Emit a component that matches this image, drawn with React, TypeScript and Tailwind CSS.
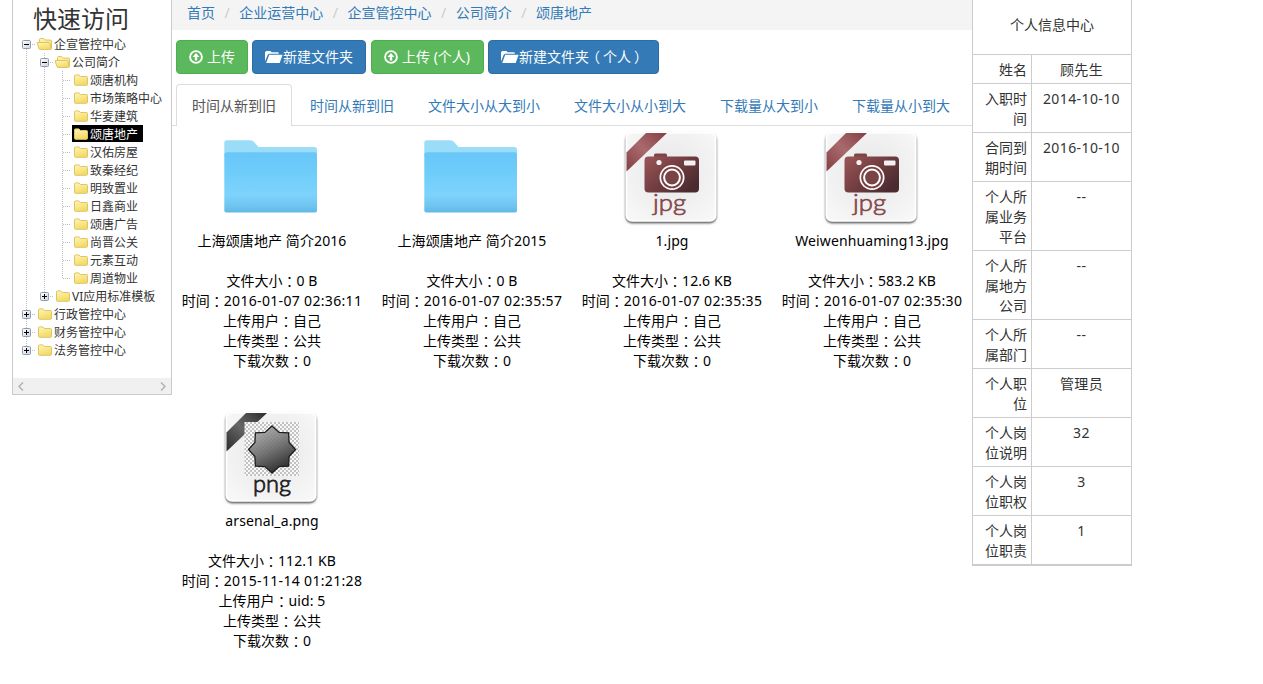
import React from "react";

type Node = { label: string; level: 0 | 1 | 2; kind: "open" | "closed" | "leaf"; selected?: boolean; last?: boolean };

const tree: Node[] = [
  { label: "企宣管控中心", level: 0, kind: "open" },
  { label: "公司简介", level: 1, kind: "open" },
  { label: "颂唐机构", level: 2, kind: "leaf" },
  { label: "市场策略中心", level: 2, kind: "leaf" },
  { label: "华麦建筑", level: 2, kind: "leaf" },
  { label: "颂唐地产", level: 2, kind: "leaf", selected: true },
  { label: "汉佑房屋", level: 2, kind: "leaf" },
  { label: "致秦经纪", level: 2, kind: "leaf" },
  { label: "明致置业", level: 2, kind: "leaf" },
  { label: "日鑫商业", level: 2, kind: "leaf" },
  { label: "颂唐广告", level: 2, kind: "leaf" },
  { label: "尚晋公关", level: 2, kind: "leaf" },
  { label: "元素互动", level: 2, kind: "leaf" },
  { label: "周道物业", level: 2, kind: "leaf", last: true },
  { label: "VI应用标准模板", level: 1, kind: "closed", last: true },
  { label: "行政管控中心", level: 0, kind: "closed" },
  { label: "财务管控中心", level: 0, kind: "closed" },
  { label: "法务管控中心", level: 0, kind: "closed", last: true },
];

const dots = { stroke: "#bdbdbd", strokeWidth: 1, strokeDasharray: "1 1" };

function Guide({ from = 0, to = 18, branch = false }: { from?: number; to?: number; branch?: boolean }) {
  return (
    <svg className="h-[18px] w-[18px] shrink-0" viewBox="0 0 18 18">
      <line x1="8.5" x2="8.5" y1={from} y2={to} {...dots} />
      {branch && <line x1="9" x2="17" y1="9.5" y2="9.5" {...dots} />}
    </svg>
  );
}

function Toggle({ open, first, last }: { open: boolean; first?: boolean; last?: boolean }) {
  return (
    <svg className="h-[18px] w-[18px] shrink-0" viewBox="0 0 18 18">
      <defs>
        <linearGradient id="toggleFill" x1="0" y1="0" x2="1" y2="1">
          <stop offset="0" stopColor="#fff" />
          <stop offset="1" stopColor="#cfd3d8" />
        </linearGradient>
      </defs>
      {!first && <line x1="8.5" x2="8.5" y1="0" y2="5" {...dots} />}
      {!last && <line x1="8.5" x2="8.5" y1="14" y2="18" {...dots} />}
      <line x1="14" x2="18" y1="9.5" y2="9.5" {...dots} />
      <rect x="4.5" y="5.5" width="8" height="8" rx="1" fill="url(#toggleFill)" stroke="#8c9cb4" />
      <path d={open ? "M6 9.5h5" : "M6 9.5h5M8.5 7v5"} stroke="#000" />
    </svg>
  );
}

function TreeFolder({ open }: { open: boolean }) {
  return (
    <svg className="h-[18px] w-[18px] shrink-0" viewBox="0 0 18 18">
      <defs>
        <linearGradient id="yellow" x1="0" y1="0" x2="0.4" y2="1">
          <stop offset="0" stopColor="#fff6b8" />
          <stop offset="1" stopColor="#f3da66" />
        </linearGradient>
      </defs>
      {open ? (
        <g stroke="#dfc566" fill="url(#yellow)" strokeLinejoin="round">
          <path d="M3.5 13.5V4.5q0-1 1-1h3.2l1.5 1.5h5.3q1 0 1 1v7.5z" />
          <path d="M1 7.5h11.8q.7 0 .9.7l1.6 5.8q-.2.5-.8.5H4q-.7 0-.9-.6z" />
        </g>
      ) : (
        <path d="M2.5 13.3V4.9q0-1 1-1h3.4l1.6 1.6h6q1 0 1 1v6.8q0 1-1 1h-11q-1 0-1-1z" fill="url(#yellow)" stroke="#dfc566" />
      )}
    </svg>
  );
}

function TreeRow({ node, first }: { node: Node; first: boolean }) {
  return (
    <div className="flex h-[18px] items-center pl-[5px] text-[12px] leading-[18px] whitespace-nowrap text-[#333]">
      {node.level > 0 && <Guide />}
      {node.level > 1 && <Guide />}
      {node.kind === "leaf" ? (
        <Guide branch to={node.last ? 10 : 18} />
      ) : (
        <Toggle open={node.kind === "open"} first={first} last={node.last} />
      )}
      <div className={node.selected ? "mb-px flex h-[17px] items-center bg-black pr-[5px] text-white" : "flex h-[18px] items-center"}>
        <TreeFolder open={node.kind === "open"} />
        <span className="pt-[2px]">{node.label}</span>
      </div>
    </div>
  );
}

function UploadIcon() {
  return (
    <svg className="mr-1 h-[14px] w-[14px]" viewBox="0 0 14 14">
      <circle cx="7" cy="7" r="5.9" fill="none" stroke="#fff" strokeWidth="1.9" />
      <path d="M7 2.9L10.4 7H8.2v3.6H5.8V7H3.6z" fill="#fff" />
    </svg>
  );
}

function OpenFolderIcon() {
  return (
    <svg className="h-[14px] w-[18px]" viewBox="0 0 18 14">
      <path d="M0 11.5V2.2L1.2.9h4.2l1.2 1.3h6.2q1 0 1 1v.6H4L2.6 5z" fill="#fff" />
      <path d="M4.2 4.8H17.6L14.7 13H1.2z" fill="#fff" />
    </svg>
  );
}

function FolderArt() {
  return (
    <svg className="h-[105px] w-[100px]" viewBox="0 0 100 105">
      <defs>
        <linearGradient id="folderBody" x1="0" y1="0" x2="0" y2="1">
          <stop offset="0" stopColor="#68c7f7" />
          <stop offset="0.25" stopColor="#6ccbf9" />
          <stop offset="0.7" stopColor="#7dd3fc" />
          <stop offset="0.88" stopColor="#70c6f0" />
          <stop offset="1" stopColor="#62b8e6" />
        </linearGradient>
      </defs>
      <path d="M2.3 30V16.5q0-2.3 2.3-2.3h24q2 0 3.5 1.8l3 3.5q1.2 1.5 3 1.5h54.5q2.4 0 2.4 2.5V32z" fill="#9bdcf8" />
      <path d="M2.3 29q0-2.7 2.5-2.7h87.7q2.5 0 2.5 2.7V84.5q0 2-2 2H4.3q-2 0-2-2z" fill="url(#folderBody)" />
    </svg>
  );
}

function Tile({ children, ribbon, tone, sheen }: { children: React.ReactNode; ribbon: string; tone: string; sheen: string }) {
  return (
    <svg className="h-[105px] w-[100px]" viewBox="0 0 100 105">
      <defs>
        <radialGradient id="tile" cx="0.5" cy="0.45" r="0.7">
          <stop offset="0" stopColor="#e6e6e6" />
          <stop offset="1" stopColor="#f8f8f8" />
        </radialGradient>
        <linearGradient id={ribbon} x1="0" y1="1" x2="1" y2="0">
          <stop offset="0" stopColor={tone} />
          <stop offset="0.5" stopColor={sheen} />
          <stop offset="1" stopColor={tone} />
        </linearGradient>
        <filter id="tileShadow" x="-10%" y="-10%" width="120%" height="120%">
          <feGaussianBlur stdDeviation="0.8" />
        </filter>
      </defs>
      <rect x="3.6" y="7.5" width="90.8" height="89.7" rx="6.5" fill="#555" filter="url(#tileShadow)" />
      <rect x="4.4" y="6.6" width="89.2" height="88.2" rx="5.5" fill="url(#tile)" stroke="#fff" strokeWidth="1.8" />
      <path d="M4.5 26.5L24 7H45L4.5 45.5z" fill={"url(#" + ribbon + ")"} />
      {children}
    </svg>
  );
}

function JpgArt() {
  return (
    <Tile ribbon="ribbonRed" tone="#843f43" sheen="#a86a6d">
      <defs>
        <linearGradient id="camera" x1="0" y1="0" x2="1" y2="0.7">
          <stop offset="0" stopColor="#9c5658" />
          <stop offset="0.5" stopColor="#743f42" />
          <stop offset="1" stopColor="#4a2b2f" />
        </linearGradient>
      </defs>
      <path d="M32 31v-2q0-1.5 1.5-1.5h10Q45 27.5 45 29v2z" fill="#7d4548" />
      <rect x="22.5" y="30.5" width="54.5" height="36" rx="4" fill="url(#camera)" />
      <circle cx="37" cy="36.5" r="2.6" fill="#f5f0f0" />
      <rect x="62" y="34.5" width="11.5" height="5" rx="1" fill="#f5f0f0" />
      <circle cx="50" cy="51.5" r="12.5" fill="#fff" />
      <circle cx="50" cy="51.5" r="10.8" fill="#7a4447" />
      <circle cx="50" cy="51.5" r="7.9" fill="none" stroke="#fff" strokeWidth="2" />
      <text x="47.5" y="85" textAnchor="middle" textLength="33" lengthAdjust="spacingAndGlyphs" fill="#84494c" stroke="#84494c" strokeWidth="0.7" className="font-['Lato',sans-serif] text-[23px] font-light">jpg</text>
    </Tile>
  );
}

function PngArt() {
  const star = Array.from({ length: 16 }, (_, i) => {
    const angle = (i * Math.PI) / 8 - Math.PI / 2;
    const r = i % 2 ? 18.5 : 23.5;
    return (50 + r * Math.cos(angle)).toFixed(1) + "," + (43.5 + r * Math.sin(angle)).toFixed(1);
  }).join(" ");
  return (
    <Tile ribbon="ribbonGray" tone="#2c2c2c" sheen="#666">
      <defs>
        <pattern id="checks" width="4" height="4" patternUnits="userSpaceOnUse">
          <rect width="4" height="4" fill="#f8f8f8" />
          <path d="M0 0h2v2H0zM2 2h2v2H2z" fill="#c2c2c2" />
        </pattern>
        <linearGradient id="star" x1="0.2" y1="0" x2="0.7" y2="1">
          <stop offset="0" stopColor="#aaa" stopOpacity="0.85" />
          <stop offset="0.5" stopColor="#707070" stopOpacity="0.95" />
          <stop offset="1" stopColor="#262626" />
        </linearGradient>
      </defs>
      <rect x="22.5" y="16" width="54.5" height="54" fill="url(#checks)" />
      <polygon points={star} fill="url(#star)" stroke="#1d1d1d" strokeWidth="1.3" />
      <text x="50" y="86" textAnchor="middle" textLength="38" lengthAdjust="spacingAndGlyphs" fill="#222" stroke="#222" strokeWidth="0.8" className="font-['Lato',sans-serif] text-[23px] font-light">png</text>
    </Tile>
  );
}

type FileItem = { art: "folder" | "jpg" | "png"; name: string; size: string; time: string; user: string };

const files: FileItem[] = [
  { art: "folder", name: "上海颂唐地产 简介2016", size: "0 B", time: "2016-01-07 02:36:11", user: "自己" },
  { art: "folder", name: "上海颂唐地产 简介2015", size: "0 B", time: "2016-01-07 02:35:57", user: "自己" },
  { art: "jpg", name: "1.jpg", size: "12.6 KB", time: "2016-01-07 02:35:35", user: "自己" },
  { art: "jpg", name: "Weiwenhuaming13.jpg", size: "583.2 KB", time: "2016-01-07 02:35:30", user: "自己" },
  { art: "png", name: "arsenal_a.png", size: "112.1 KB", time: "2015-11-14 01:21:28", user: "uid: 5" },
];

function Field({ label, value }: { label: string; value: string }) {
  return (
    <div className="flex h-5">
      <span>{label}</span>
      <span className="font-['Noto_Sans_CJK_TC',sans-serif]">：</span>
      <span className={value.includes("-") ? "tracking-[0.33px]" : "tracking-[0.1px]"}>{value}</span>
    </div>
  );
}

function FileCard({ file }: { file: FileItem }) {
  return (
    <div className="flex h-[280px] flex-col items-center text-center text-[14px] leading-5 whitespace-nowrap text-black">
      {file.art === "folder" ? <FolderArt /> : file.art === "jpg" ? <JpgArt /> : <PngArt />}
      <div className="mb-5 h-5 tracking-[0.1px]">{file.name}</div>
      <Field label="文件大小" value={file.size} />
      <Field label="时间" value={file.time} />
      <Field label="上传用户" value={file.user} />
      <Field label="上传类型" value="公共" />
      <Field label="下载次数" value="0" />
    </div>
  );
}

const info: [string, string][] = [
  ["姓名", "顾先生"],
  ["入职时间", "2014-10-10"],
  ["合同到期时间", "2016-10-10"],
  ["个人所属业务平台", "--"],
  ["个人所属地方公司", "--"],
  ["个人所属部门", "--"],
  ["个人职位", "管理员"],
  ["个人岗位说明", "32"],
  ["个人岗位职权", "3"],
  ["个人岗位职责", "1"],
];

const crumbs = ["首页", "企业运营中心", "企宣管控中心", "公司简介", "颂唐地产"];
const tabs = ["时间从新到旧", "时间从新到旧", "文件大小从大到小", "文件大小从小到大", "下载量从大到小", "下载量从小到大"];

const green = "flex h-[34px] items-center rounded-[4px] border border-[#4cae4c] bg-[#5cb85c] pl-3 text-white";
const blue = "flex h-[34px] items-center rounded-[4px] border border-[#2e6da4] bg-[#337ab7] pl-3 text-white";

export default function App() {
  return (
    <div className="flex h-[684px] w-[1263px] items-start overflow-hidden bg-white pl-3 font-['Noto_Sans','Noto_Sans_CJK_SC',sans-serif] text-[14px] leading-5 text-[#333]">
      <aside className="flex h-[395px] w-[160px] shrink-0 flex-col border-x border-b border-[#ccc]">
        <h1 className="h-[35px] pl-[20px] text-[24px] leading-[37px]">快速访问</h1>
        <div className="flex-1">
          {tree.map((n, i) => (
            <TreeRow key={i} node={n} first={i === 0} />
          ))}
        </div>
        <div className="flex h-[16px] items-center justify-between bg-[#f0f0f0] px-[5px]">
          <svg className="h-[9px] w-[6px]" viewBox="0 0 6 9"><path d="M5 .5L1 4.5l4 4" fill="none" stroke="#b0b0b0" strokeWidth="1.5" /></svg>
          <svg className="h-[9px] w-[6px]" viewBox="0 0 6 9"><path d="M1 .5l4 4-4 4" fill="none" stroke="#b0b0b0" strokeWidth="1.5" /></svg>
        </div>
      </aside>

      <main className="w-[800px] shrink-0">
        <nav className="flex h-[30px] items-start bg-[#f4f4f4] pt-[3px] pl-[15px]">
          {crumbs.map((c, i) => (
            <React.Fragment key={c}>
              {i > 0 && <span className="w-[24.25px] text-center text-[#ccc]">/</span>}
              <a className="text-[#337ab7]">{c}</a>
            </React.Fragment>
          ))}
        </nav>
        <div className="mt-[10px] flex whitespace-nowrap pl-1">
          <button className={green + " w-[72px]"}><UploadIcon />上传</button>
          <button className={blue + " ml-1 w-[114px]"}><OpenFolderIcon />新建文件夹</button>
          <button className={green + " ml-[5px] w-[113px]"}><UploadIcon />上传 (个人)</button>
          <button className={blue + " ml-1 w-[171px]"}>
            <OpenFolderIcon />
            <span>新建文件夹</span>
            <span className="mr-[3px] ml-1 [font-feature-settings:'halt']">（</span>
            <span>个人</span>
            <span className="ml-[3px] [font-feature-settings:'halt']">）</span>
          </button>
        </div>
        <div className="mt-[10px] flex h-[42px] gap-[2px] border-b border-[#ddd] pl-1">
          {tabs.map((t, i) => (
            <a
              key={i}
              className={
                i === 0
                  ? "h-[42px] rounded-t-[4px] border border-b-0 border-[#ddd] bg-white px-[15px] pt-[11px] whitespace-nowrap text-[#555]"
                  : "h-[42px] border border-transparent px-[15px] pt-[11px] whitespace-nowrap text-[#337ab7]"
              }
            >
              {t}
            </a>
          ))}
        </div>
        <div className="grid grid-cols-4">
          {files.map((f, i) => (
            <FileCard key={i} file={f} />
          ))}
        </div>
      </main>

      <aside className="w-[160px] shrink-0 border-x border-b-2 border-[#ccc]">
        <div className="h-[54px] pt-[15px] text-center">个人信息中心</div>
        {info.map(([k, v]) => (
          <div key={k} className="flex border-t border-[#ccc]">
            <div className="w-[59px] border-r border-[#ccc] pt-[5px] pr-1 pb-[3px] pl-[11px] text-right break-all">{k}</div>
            <div className="flex-1 pt-[5px] text-center tracking-[0.4px]">{v}</div>
          </div>
        ))}
      </aside>
    </div>
  );
}
